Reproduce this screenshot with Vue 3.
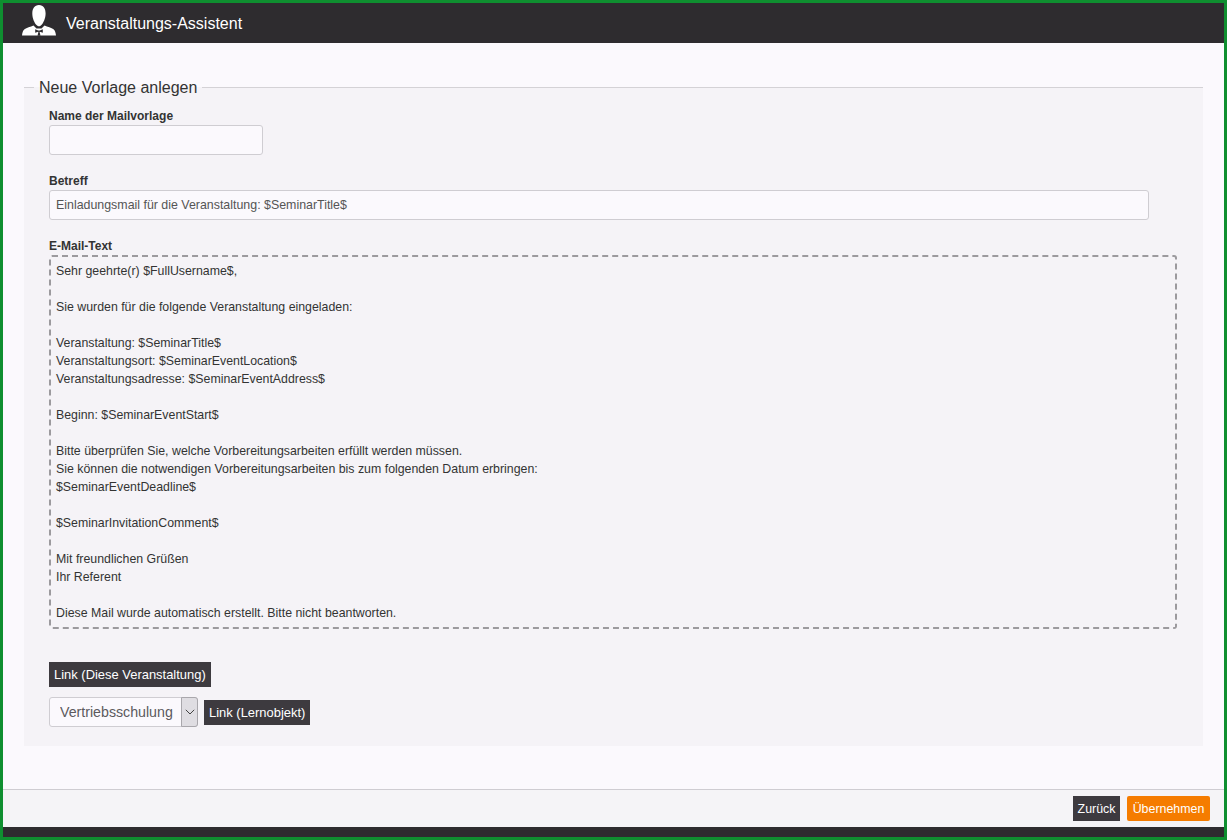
<script setup>
const lines = [
  'Sehr geehrte(r) $FullUsername$,',
  '',
  'Sie wurden für die folgende Veranstaltung eingeladen:',
  '',
  'Veranstaltung: $SeminarTitle$',
  'Veranstaltungsort: $SeminarEventLocation$',
  'Veranstaltungsadresse: $SeminarEventAddress$',
  '',
  'Beginn: $SeminarEventStart$',
  '',
  'Bitte überprüfen Sie, welche Vorbereitungsarbeiten erfüllt werden müssen.',
  'Sie können die notwendigen Vorbereitungsarbeiten bis zum folgenden Datum erbringen:',
  '$SeminarEventDeadline$',
  '',
  '$SeminarInvitationComment$',
  '',
  'Mit freundlichen Grüßen',
  'Ihr Referent',
  '',
  'Diese Mail wurde automatisch erstellt. Bitte nicht beantworten.'
]
</script>

<template>
  <div class="window">
    <header class="head">
      <svg class="logo" width="34" height="32" viewBox="0 0 34 32">
        <path fill="#fff" d="M17 1c4.600 0 6.600 3.600 6.600 8.400 0 5-2.400 9.600-4.200 11.600-.8.900-1.600 1.200-2.400 1.200s-1.700-.3-2.500-1.200C12.600 19 10.300 14.400 10.300 9.400 10.300 4.600 12.400 1 17 1z"/>
        <path fill="#fff" d="M11.500 21.500C8.500 22.900 4.500 23.800 2.500 25.200 1 26.200.3 28.500 0 31.500h34c-.3-3-1-5.300-2.500-6.300-2-1.400-6-2.300-9-3.700l-3 3h-5z"/>
        <path fill="#2e2c2f" d="M13.200 25.200l3 1.300h1.600l3-1.300v3.600l-3-1.100-.2.400.9 3.700h-3l.9-3.700-.2-.4-3 1.100z"/>
      </svg>
      <span class="title">Veranstaltungs-Assistent</span>
    </header>

    <main class="content">
      <fieldset class="panel">
        <legend class="legend">Neue Vorlage anlegen</legend>

        <label class="label name-label">Name der Mailvorlage</label>
        <input class="input name-input" type="text" />

        <label class="label subject-label">Betreff</label>
        <input class="input subject-input" type="text" value="Einladungsmail für die Veranstaltung: $SeminarTitle$" />

        <label class="label body-label">E-Mail-Text</label>
        <div class="editor">
          <div v-for="(line, i) in lines" :key="i" class="line">{{ line }}</div>
        </div>

        <div class="link-row">
          <button class="btn link-btn" type="button">Link (Diese Veranstaltung)</button>
        </div>
        <div class="object-row">
          <span class="select-wrap">
            <select class="select">
              <option>Vertriebsschulung</option>
            </select>
            <span class="select-arrow">
              <svg width="10" height="6" viewBox="0 0 10 6"><path d="M.8.8L5 5 9.200.8" fill="none" stroke="#444" stroke-width="1"/></svg>
            </span>
          </span>
          <button class="btn link-btn" type="button">Link (Lernobjekt)</button>
        </div>
      </fieldset>
    </main>

    <footer class="foot">
      <button class="btn back" type="button">Zurück</button>
      <button class="btn primary" type="button">Übernehmen</button>
    </footer>
    <div class="bottom-bar"></div>
  </div>
</template>

<style scoped>
.window {
  box-sizing: border-box;
  width: 1227px;
  height: 840px;
  border: 3px solid #0f8f30;
  display: flex;
  flex-direction: column;
  background: #fbf9fd;
  font-family: "Liberation Sans", Arial, sans-serif;
  color: #333;
  overflow: hidden;
}
.head {
  flex: none;
  height: 40px;
  background: #2e2c2f;
  display: flex;
  align-items: center;
  padding-left: 19px;
}
.logo {
  flex: none;
  margin-top: -6px;
}
.title {
  margin-left: 10px;
  margin-top: 2px;
  font-size: 16px;
  color: #fff;
}
.content {
  flex: 1;
  min-height: 0;
  padding: 33px 21px 0 21px;
}
.panel {
  box-sizing: border-box;
  height: 670px;
  margin: 0;
  padding: 0 0 0 25px;
  border: none;
  border-top: 1px solid #d4d2d6;
  background: #f5f3f7;
  display: flex;
  flex-direction: column;
  align-items: flex-start;
  min-width: 0;
}
.legend {
  margin-left: -15px;
  padding: 2px 5px 0;
  font-size: 16px;
  line-height: 20px;
  color: #333;
}
.label {
  display: block;
  font-size: 12px;
  font-weight: 700;
  line-height: 14px;
  color: #333;
}
.name-label {
  margin-top: 11px;
}
.subject-label {
  margin-top: 19px;
}
.body-label {
  margin-top: 19px;
}
.input {
  box-sizing: border-box;
  display: block;
  height: 30px;
  margin-top: 2px;
  padding: 0 6px;
  border: 1px solid #cfcdd2;
  border-radius: 3px;
  background: #fbf9fd;
  font: 12.4px "Liberation Sans", Arial, sans-serif;
  color: #555;
}
.name-input {
  width: 214px;
}
.subject-input {
  width: 1100px;
}
.editor {
  box-sizing: border-box;
  width: 1128px;
  height: 374px;
  margin-top: 2px;
  padding: 5px 5px;
  border: 2px dashed #9c9a9e;
  border-radius: 3px;
  font-size: 12.35px;
  line-height: 18px;
  color: #333;
}
.line {
  height: 18px;
  white-space: pre;
}
.link-row {
  margin-top: 33px;
  display: flex;
}
.object-row {
  margin-top: 10px;
  display: flex;
  align-items: center;
  gap: 6px;
}
.btn {
  box-sizing: border-box;
  height: 25px;
  padding: 0 5px;
  border: none;
  background: #3d3a3f;
  color: #fff;
  font: 12.4px "Liberation Sans", Arial, sans-serif;
  white-space: nowrap;
}
.link-btn {
  font-size: 12.95px;
}
.back {
  width: 47px;
  padding: 0;
}
.primary {
  width: 83px;
  padding: 0;
  background: #f57c00;
  border-radius: 2px;
  color: #fff;
}
.select-wrap {
  position: relative;
  display: block;
  width: 149px;
  height: 30px;
}
.select {
  box-sizing: border-box;
  display: block;
  width: 149px;
  height: 30px;
  padding: 0 0 0 10px;
  border: 1px solid #cfcdd2;
  border-radius: 3px;
  background: #fbf9fd;
  appearance: none;
  font: 14.2px "Liberation Sans", Arial, sans-serif;
  color: #5c5a5e;
}
.select-arrow {
  position: absolute;
  top: 0;
  right: 0;
  box-sizing: border-box;
  width: 17px;
  height: 30px;
  border: 1px solid #a9a7ac;
  border-radius: 0 3px 3px 0;
  background: #dfdde2;
  display: flex;
  align-items: center;
  justify-content: center;
  pointer-events: none;
}
.foot {
  flex: none;
  box-sizing: border-box;
  height: 38px;
  border-top: 1px solid #cfcdd2;
  background: #f5f4f7;
  display: flex;
  justify-content: flex-end;
  align-items: flex-start;
  gap: 7px;
  padding: 6px 14px 0 0;
}
.bottom-bar {
  flex: none;
  height: 10px;
  background: #2e2c2f;
}
</style>
